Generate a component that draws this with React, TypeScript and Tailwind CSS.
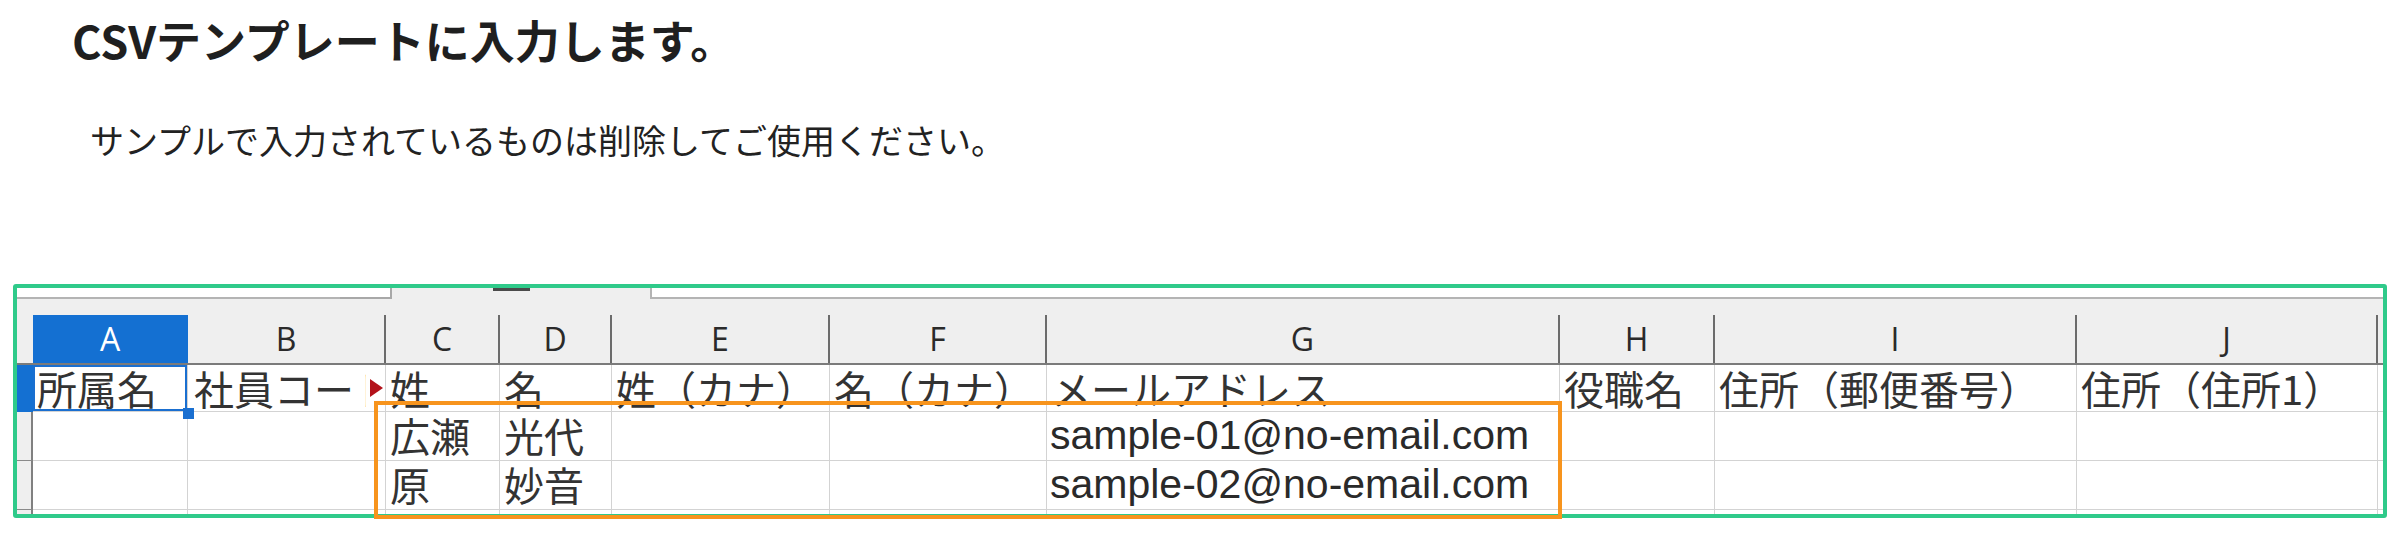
import React from 'react';

// column widths measured from the sheet screenshot
const columns = [
    { key: 'A', width: 'w-[155px]' },
    { key: 'B', width: 'w-[198px]' },
    { key: 'C', width: 'w-[114px]' },
    { key: 'D', width: 'w-[112px]' },
    { key: 'E', width: 'w-[218px]' },
    { key: 'F', width: 'w-[217px]' },
    { key: 'G', width: 'w-[513px]' },
    { key: 'H', width: 'w-[155px]' },
    { key: 'I', width: 'w-[362px]' },
    { key: 'J', width: 'w-[301px]' },
];

const headerRow = ['所属名', '社員コード', '姓', '名', '姓（カナ）', '名（カナ）', 'メールアドレス', '役職名', '住所（郵便番号）', '住所（住所1）'];

const dataRows = [
    ['', '', '広瀬', '光代', '', '', 'sample-01@no-email.com', '', '', ''],
    ['', '', '原', '妙音', '', '', 'sample-02@no-email.com', '', '', ''],
];

const jp = "font-['Noto_Sans_CJK_JP',sans-serif]";

function ColumnHeader() {
    return (
        <div className="flex h-[50px] border-b-2 border-[#7b7b7b] bg-[#efefef]">
            <div className="w-[16px] shrink-0" />
            {columns.map((c) => (
                <div
                    key={c.key}
                    className={
                        c.key === 'A'
                            ? `${c.width} shrink-0 bg-[#1470d2] text-white flex items-center justify-center text-[32px] font-medium font-['Open_Sans',sans-serif] border-r border-[#1470d2]`
                            : `${c.width} shrink-0 text-[#2a2a2a] flex items-center justify-center text-[32px] font-medium font-['Open_Sans',sans-serif] border-r-2 border-[#6b6b6b]`
                    }
                >
                    {c.key}
                </div>
            ))}
            <div className="flex-1" />
        </div>
    );
}

function SheetRow({ cells, height, first }: { cells: string[]; height: string; first?: boolean }) {
    return (
        <div className={`flex ${height}`}>
            <div
                className={
                    first
                        ? 'w-[16px] shrink-0 bg-[#1470d2]'
                        : 'w-[16px] shrink-0 bg-[#efefef] border-r-2 border-b border-r-[#808080] border-b-[#8a8a8a]'
                }
            />
            {columns.map((c, i) => {
                const text = cells[i];
                const isEmail = text.includes('@');
                return (
                    <div
                        key={c.key}
                        className={`${c.width} shrink-0 relative border-r border-b border-[#d3d3d3] whitespace-nowrap`}
                    >
                        {first && c.key === 'B' ? (
                            <>
                                <div className={`w-[178px] overflow-hidden pl-[6px] text-[40px] leading-[46px] text-[#333] ${jp}`}>
                                    {text}
                                </div>
                                <svg className="absolute right-[2px] top-[14px]" width="13" height="18" viewBox="0 0 13 18">
                                    <polygon points="0,0 13,9 0,18" fill="#b3121a" />
                                </svg>
                            </>
                        ) : isEmail ? (
                            <div className="pl-[3px] text-[41px] leading-[47px] text-[#2a2a2a] font-['Liberation_Sans',sans-serif]">
                                {text}
                            </div>
                        ) : (
                            <div className={`pl-[4px] text-[40px] leading-[46px] text-[#333] ${jp}`}>{text}</div>
                        )}
                        {first && c.key === 'A' && (
                            <div className="absolute inset-0 border-2 border-[#1a6fd0]" />
                        )}
                    </div>
                );
            })}
            <div className="flex-1 border-b border-[#d3d3d3]" />
        </div>
    );
}

export default function App() {
    return (
        <div className="w-[2400px] h-[536px] bg-white overflow-hidden">
            <h1 className={`pl-[72px] pt-[13px] text-[45px] leading-[54px] font-bold text-[#1f1f1f] ${jp}`}>
                CSVテンプレートに入力します。
            </h1>
            <p className={`pl-[90px] mt-[52px] text-[34px] leading-[41px] text-[#222] ${jp}`}>
                サンプルで入力されているものは削除してご使用ください。
            </p>

            {/* sheet frame */}
            <div className="relative mx-[13px] mt-[124px] h-[234px] border-4 border-[#2fca8a] rounded-[3px]">
                <div className="h-full overflow-hidden flex flex-col">
                    {/* tab strip remnants */}
                    <div className="flex h-[11px] shrink-0">
                        <div className="w-[323px] border-b-2 border-[#b4b4b4] bg-white" />
                        <div className="w-[52px] border-r-2 border-b-2 border-[#a8a8a8] bg-white" />
                        <div className="w-[258px] bg-[#efefef] flex">
                            <div className="ml-[101px] w-[37px] h-[3px] bg-[#4a4a4a]" />
                        </div>
                        <div className="flex-1 border-l-2 border-b-2 border-[#b4b4b4] bg-white" />
                    </div>
                    <div className="h-[16px] shrink-0 bg-[#efefef]" />
                    <ColumnHeader />
                    <SheetRow cells={headerRow} height="h-[47px]" first />
                    <SheetRow cells={dataRows[0]} height="h-[49px]" />
                    <SheetRow cells={dataRows[1]} height="h-[49px]" />
                    <div className="flex flex-1">
                        <div className="w-[16px] shrink-0 bg-[#efefef] border-r-2 border-[#808080]" />
                        {columns.map((c) => (
                            <div key={c.key} className={`${c.width} shrink-0 border-r border-[#d3d3d3]`} />
                        ))}
                    </div>
                </div>

                {/* fill handle of the selected cell */}
                <div className="absolute left-[166px] top-[120px] w-[11px] h-[11px] bg-[#1a6fd0]" />

                {/* sample rows highlight */}
                <div className="absolute left-[357px] top-[113px] w-[1188px] h-[118px] border-4 border-[#f7941d]" />
            </div>
        </div>
    );
}
